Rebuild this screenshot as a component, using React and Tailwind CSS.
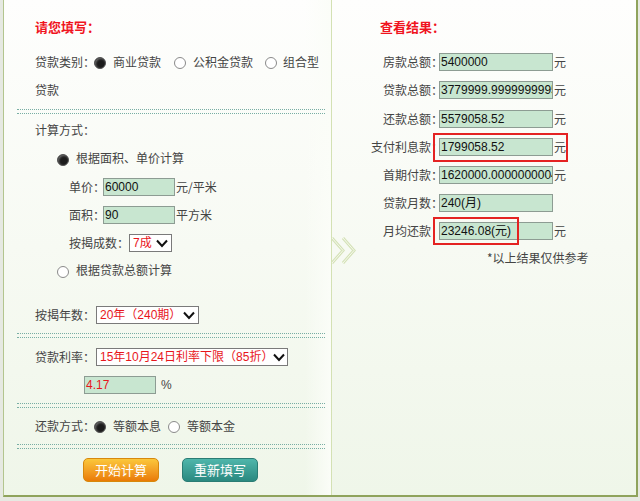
import React from "react";

const cjk = { fontFamily: '"Noto Sans CJK SC", "Noto Sans", sans-serif' };
const num = { fontFamily: '"Liberation Sans", Arial, "Noto Sans CJK SC", sans-serif' };

function Radio({ on }) {
  return on ? (
    <span className="inline-block w-[12px] h-[12px] rounded-full border border-[#555] bg-[#1c1c1c] shadow-[inset_1px_1px_2px_rgba(255,255,255,0.35)] shrink-0 translate-y-[2px]" />
  ) : (
    <span className="inline-block w-[12px] h-[12px] rounded-full border border-[#8a8a8a] bg-white shrink-0 translate-y-[2px]" />
  );
}

function Chevron() {
  return (
    <svg width="12" height="9" viewBox="0 0 12 9" className="shrink-0">
      <polyline points="1,1.5 6,7 11,1.5" fill="none" stroke="#111" strokeWidth="2" />
    </svg>
  );
}

function Select({ text, w }) {
  return (
    <div className={`flex items-center justify-between h-[18px] border border-[#7a7a7a] bg-white pl-[3px] pr-[3px] shrink-0 ${w}`}>
      <span className="text-[12px] text-[#e8161c] leading-none whitespace-nowrap" style={num}>{text}</span>
      <Chevron />
    </div>
  );
}

function GreenInput({ value, w, red }) {
  return (
    <div className={`h-[18px] border border-[#8d9c93] bg-[#c8e6d0] flex items-center pl-[1px] overflow-hidden shrink-0 ${w}`}>
      <span className={`text-[12px] leading-none whitespace-nowrap ${red ? "text-[#e8161c]" : "text-[#111]"}`} style={num}>{value}</span>
    </div>
  );
}

function Dotted() {
  return <div className="ml-[13px] mr-[6px] h-[5px] border-t border-b border-dotted border-[#78aea4]" />;
}

function Label({ text, w }) {
  return (
    <span className={`flex shrink-0 whitespace-nowrap ${w}`}>
      <span>{text}</span>
      <span className="tracking-[-4px]">：</span>
    </span>
  );
}

function ResultRow({ label, colon = true, value, unit = true, h = "h-[28px]" }) {
  return (
    <div className={`${h} flex items-center`}>
      <div className="w-[107px] shrink-0 flex justify-end items-center text-[12px] text-[#444]">
        <span className="whitespace-nowrap">{label}</span>
        <span className="w-[8px] whitespace-nowrap tracking-[-4px]">{colon ? "：" : ""}</span>
      </div>
      <GreenInput value={value} w="w-[114px]" />
      {unit && <span className="text-[12px] text-[#444] ml-[1px]">元</span>}
    </div>
  );
}

export default function App() {
  return (
    <div className="w-[640px] h-[501px] bg-[#e6e9e2] overflow-hidden" style={cjk}>
      <div className="ml-[3px] w-[635px] h-[497px] border-l border-[#b3c58e] border-r-2 border-b-2 border-r-[#8fa35c] border-b-[#8fa35c] bg-gradient-to-b from-[#fefefd] via-[#f7faf3] to-[#eff6e9] flex relative">
        {/* Left panel */}
        <div className="w-[327px] flex flex-col pt-[13px] text-[12px] text-[#444] bg-gradient-to-r from-transparent from-[92%] to-[#fbfdf8]">
          <div className="h-[28px] flex items-center pl-[31px] text-[13px] font-bold text-[#f0141e]">请您填写：</div>
          <div className="mt-[7px] h-[28px] flex items-center pl-[31px] whitespace-nowrap">
            <span>贷款类别：</span>
            <span className="ml-[-1px]"><Radio on /></span>
            <span className="ml-[7px]">商业贷款</span>
            <span className="ml-[13px]"><Radio /></span>
            <span className="ml-[7px]">公积金贷款</span>
            <span className="ml-[12px]"><Radio /></span>
            <span className="ml-[6px]">组合型</span>
          </div>
          <div className="h-[28px] flex items-center pl-[31px]">贷款</div>
          <div className="mt-[5px]"><Dotted /></div>
          <div className="mt-[2px] h-[28px] flex items-center pl-[31px]">计算方式：</div>
          <div className="h-[28px] flex items-center pl-[53px]">
            <Radio on />
            <span className="ml-[7px]">根据面积、单价计算</span>
          </div>
          <div className="h-[28px] flex items-center pl-[65px] pt-[2px]">
            <Label text="单价" w="w-[34px]" />
            <GreenInput value="60000" w="w-[72px]" />
            <span className="ml-[1px]">元/平米</span>
          </div>
          <div className="h-[28px] flex items-center pl-[65px] pt-[2px]">
            <Label text="面积" w="w-[34px]" />
            <GreenInput value="90" w="w-[72px]" />
            <span className="ml-[1px]">平方米</span>
          </div>
          <div className="h-[28px] flex items-center pl-[65px] pt-[2px]">
            <span className="w-[60px] shrink-0 whitespace-nowrap">按揭成数：</span>
            <Select text="7成" w="w-[43px]" />
          </div>
          <div className="h-[28px] flex items-center pl-[53px]">
            <Radio />
            <span className="ml-[7px]">根据贷款总额计算</span>
          </div>
          <div className="mt-[17px] h-[28px] flex items-center pl-[31px]">
            <span className="w-[61px] shrink-0 whitespace-nowrap">按揭年数：</span>
            <Select text="20年（240期）" w="w-[103px]" />
          </div>
          <div className="mt-[4px]"><Dotted /></div>
          <div className="mt-[5px] h-[28px] flex items-center pl-[31px]">
            <span className="w-[61px] shrink-0 whitespace-nowrap">贷款利率：</span>
            <Select text="15年10月24日利率下限（85折）" w="w-[192px]" />
          </div>
          <div className="h-[28px] flex items-center pl-[80px]">
            <GreenInput value="4.17" w="w-[72px]" red />
            <span className="ml-[5px]" style={num}>%</span>
          </div>
          <div className="mt-[4px]"><Dotted /></div>
          <div className="mt-[4px] h-[28px] flex items-center pl-[31px] whitespace-nowrap">
            <span>还款方式：</span>
            <span className="ml-[-1px]"><Radio on /></span>
            <span className="ml-[7px]">等额本息</span>
            <span className="ml-[7px]"><Radio /></span>
            <span className="ml-[7px]">等额本金</span>
          </div>
          <div className="mt-[4px]"><Dotted /></div>
          <div className="mt-[9px] flex pl-[79px] gap-[23px]">
            <button className="w-[76px] h-[24px] rounded-[5px] border border-[#d7880c] bg-gradient-to-b from-[#fbc73a] to-[#e97b05] text-white text-[13px] flex items-center justify-center">开始计算</button>
            <button className="w-[76px] h-[24px] rounded-[5px] border border-[#2a7c74] bg-gradient-to-b from-[#4fb6ab] to-[#2a8980] text-white text-[13px] flex items-center justify-center">重新填写</button>
          </div>
        </div>
        {/* Divider */}
        <div className="w-[1px] bg-[#d4e1b4]" />
        {/* Right panel */}
        <div className="flex-1 flex flex-col pt-[13px] text-[12px] text-[#444]">
          <div className="h-[28px] flex items-center pl-[48px] text-[13px] font-bold text-[#f0141e]">查看结果：</div>
          <div className="mt-[7px]" />
          <ResultRow label="房款总额" value="5400000" />
          <ResultRow label="贷款总额" value="3779999.9999999995" />
          <ResultRow label="还款总额" value="5579058.52" h="h-[29px]" />
          <ResultRow label="支付利息款" value="1799058.52" />
          <ResultRow label="首期付款" value="1620000.0000000004" />
          <ResultRow label="贷款月数" value="240(月)" unit={false} />
          <ResultRow label="月均还款" colon={false} value="23246.08(元)" />
          <div className="h-[26px] flex items-center pl-[155px]">*以上结果仅供参考</div>
        </div>

        {/* Annotation boxes */}
        <div className="absolute left-[429px] top-[133px] w-[135px] h-[29px] border-2 border-[#e42222]" />
        <div className="absolute left-[429px] top-[217px] w-[86px] h-[28px] border-2 border-[#e42222]" />
        {/* Chevrons over divider */}
        <svg className="absolute left-[325px] top-[237px]" width="30" height="27" viewBox="0 0 30 27">
          <polyline points="3,1 14,13.5 3,26" fill="none" stroke="#d5e2b8" strokeWidth="3" />
          <polyline points="14,1 25,13.5 14,26" fill="none" stroke="#d5e2b8" strokeWidth="3" />
          <polyline points="3,1 14,13.5 3,26" fill="none" stroke="#f6f9ee" strokeWidth="1" />
          <polyline points="14,1 25,13.5 14,26" fill="none" stroke="#f6f9ee" strokeWidth="1" />
        </svg>
      </div>
    </div>
  );
}
